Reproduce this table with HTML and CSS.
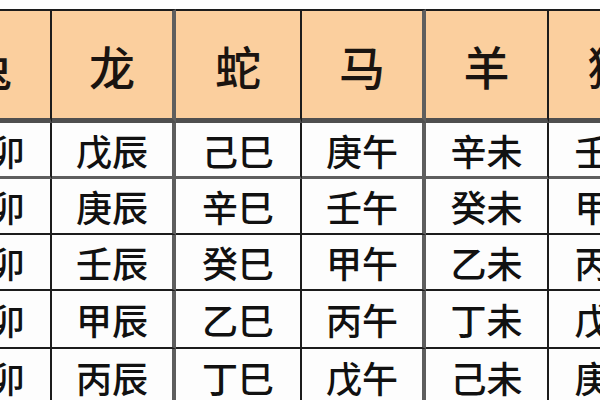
FILE: index.html
```html
<!DOCTYPE html>
<html lang="zh-CN">
<head>
<meta charset="utf-8">
<title>生肖干支表</title>
<link rel="stylesheet" href="styles.css">
</head>
<body>
<div class="viewport">
  <div class="table">
    <div class="row head">
      <div class="cell">兔</div><div class="cell">龙</div><div class="cell">蛇</div><div class="cell">马</div><div class="cell">羊</div><div class="cell">猴</div>
    </div>
    <div class="row r1">
      <div class="cell">丁卯</div><div class="cell">戊辰</div><div class="cell">己巳</div><div class="cell">庚午</div><div class="cell">辛未</div><div class="cell">壬申</div>
    </div>
    <div class="row r2">
      <div class="cell">己卯</div><div class="cell">庚辰</div><div class="cell">辛巳</div><div class="cell">壬午</div><div class="cell">癸未</div><div class="cell">甲申</div>
    </div>
    <div class="row r3">
      <div class="cell">辛卯</div><div class="cell">壬辰</div><div class="cell">癸巳</div><div class="cell">甲午</div><div class="cell">乙未</div><div class="cell">丙申</div>
    </div>
    <div class="row r4">
      <div class="cell">癸卯</div><div class="cell">甲辰</div><div class="cell">乙巳</div><div class="cell">丙午</div><div class="cell">丁未</div><div class="cell">戊申</div>
    </div>
    <div class="row r5">
      <div class="cell">乙卯</div><div class="cell">丙辰</div><div class="cell">丁巳</div><div class="cell">戊午</div><div class="cell">己未</div><div class="cell">庚申</div>
    </div>
  </div>
</div>
</body>
</html>
```
FILE: styles.css
```css
html, body {
  margin: 0;
  padding: 0;
  background: #ffffff;
}
.viewport {
  width: 600px;
  height: 400px;
  overflow: hidden;
  padding-top: 9px;
  box-sizing: border-box;
  background: #ffffff;
}
.table {
  margin-left: -72px;
  display: flex;
  flex-direction: column;
  width: 744px;
}
.row {
  display: grid;
  grid-template-columns: 124px 124px 126px 124px 123px 123px;
}
.cell {
  box-sizing: border-box;
  display: flex;
  align-items: center;
  justify-content: center;
  font-family: "Noto Sans CJK SC", "Noto Sans", sans-serif;
  font-size: 36px;
  font-weight: 500;
  line-height: 1;
  color: #111111;
  background: #fdfdfd;
  border-bottom: 2px solid #1c1c1c;
}
.row .cell:nth-child(odd) {
  border-right: 2px solid #1c1c1c;
}
.row .cell:nth-child(even) {
  border-right: 4px solid #5e5e5e;
}
.row .cell:last-child {
  border-right: none;
}
.head .cell {
  height: 114px;
  background: #fbcf9e;
  border-top: 2px solid #1c1c1c;
  border-bottom: 5px solid #4f4f4f;
  font-size: 46px;
  font-weight: 500;
  color: #1a1410;
}
.r1 .cell {
  height: 56px;
  border-bottom: 3px solid #5e5e5e;
}
.r2 .cell,
.r3 .cell {
  height: 56px;
}
.r4 .cell,
.r5 .cell {
  height: 58px;
}
```
